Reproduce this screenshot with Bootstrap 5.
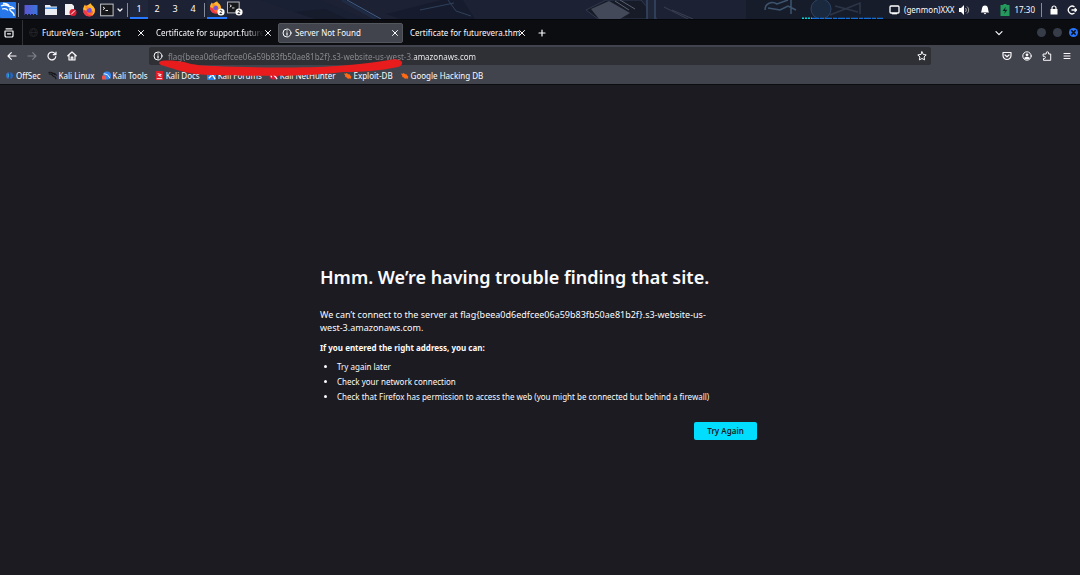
<!DOCTYPE html>
<html lang="en">
<head>
<meta charset="utf-8">
<meta name="viewport" content="width=device-width, initial-scale=1">
<title>Server Not Found</title>
<link href="https://cdn.jsdelivr.net/npm/bootstrap@5.3.0/dist/css/bootstrap.min.css" rel="stylesheet">
<style>
  body { background: #1c1b22; color: #fbfbfe; font-family: "Noto Sans", sans-serif; font-size: 8px; line-height: 12px; }
  button { background: none; border: 0; padding: 0; color: inherit; }
  svg { display: block; flex: none; }
  .ln { fill: none; stroke: currentColor; stroke-width: 1.2; stroke-linecap: round; stroke-linejoin: round; }
  .cell { display: flex; align-items: center; justify-content: center; flex: none; }
  .w-10p { width: 10px; } .w-16p { width: 16px; } .w-18p { width: 18px; } .w-20p { width: 20px; }

  .panel { height: 19px; background: #1c2133; overflow: hidden; }
  .wallpaper { position: absolute; top: 0; left: 260px; opacity: .8; }
  .rule { width: 1px; height: 14px; background: #858b99; flex: none; margin: 0 2px; }
  .under { height: 19px; border-bottom: 2px solid transparent; font-size: 9px; }
  .under.on { border-color: #2777ff; background: #20273b; }
  .clock { margin-right: 4px; }

  .tabstrip { height: 26px; background: #0c0d11; border-top: 1px solid #050609; }
  .pinned { width: 23px; height: 25px; border-right: 1px solid #303238; padding-right: 4px; }
  .tabs { gap: 2px; padding: 0 2px 0 1px; }
  .tab { width: 125px; height: 20px; border-radius: 2px; padding: 0 4px 0 5px; }
  .tab.on { background: #42444d; border: 1px solid #54565e; padding: 0 3px; gap: 3px; }
  .tab .title { flex: 1 1 0; min-width: 0; white-space: nowrap; }
  .fade-out { -webkit-mask-image: linear-gradient(90deg, #000 82%, transparent); mask-image: linear-gradient(90deg, #000 82%, transparent); }
  .dot { width: 9px; height: 9px; border-radius: 50%; background: #373c49; }
  .dot.close-win { background: #2777ff; color: #0c0d11; }
  .window-buttons { gap: 7px; padding-right: 2px; }

  .toolbar { height: 22px; background: #42444d; }
  .side { width: 149px; padding: 0 3px 0 2px; }
  .urlbar { height: 18px; background: #2f3035; border-radius: 2px; }
  .urlbar input { border: 0; outline: 0; padding: 0 0 0 1px; min-width: 0; height: 16px; font-size: 8px; color: #fbfbfe;
    background: linear-gradient(90deg, #8d8e92 247px, #fbfbfe 247px); -webkit-background-clip: text; background-clip: text; -webkit-text-fill-color: transparent; }
  .bookmarks { height: 18px; background: #42444d; border-bottom: 1px solid #0c0d11; gap: 7px; padding: 0 5px; }
  .bookmarks a { color: #fbfbfe; text-decoration: none; white-space: nowrap; gap: 2px; }
  .scribble { position: absolute; left: 157px; top: 58px; pointer-events: none; }

  .message { max-width: 440px; padding-top: 179px; }
  .message h1 { font-size: 18px; line-height: 26px; font-weight: 600; margin-bottom: 18px; white-space: nowrap; }
  .message .cause { font-size: 9px; line-height: 13px; max-width: 400px; margin-bottom: 8px; }
  .message .hint { margin-bottom: 5px; }
  .message ul { padding-left: 17px; margin-bottom: 18px; }
  .message li { line-height: 15px; }
  .retry { width: 63px; height: 18px; border-radius: 2px; background: #00ddff; color: #1c1b22; font-weight: 600; margin-right: 3px; }
</style>
</head>
<body>
<svg width="0" height="0" class="position-absolute" aria-hidden="true">
  <symbol id="x" viewBox="0 0 8 8"><path class="ln" style="stroke-width:1" d="M1.5 1.5l5 5M6.5 1.5l-5 5"/></symbol>
  <symbol id="info" viewBox="0 0 10 10"><circle class="ln" cx="5" cy="5" r="4" style="stroke-width:1"/><path class="ln" d="M5 4.8v2.3M5 2.9v.1"/></symbol>
  <symbol id="fox" viewBox="0 0 14 14"><circle cx="7" cy="7.5" r="5.8" fill="#ff6a2b"/><path d="M1.2 7C1 4.500 2.300 3 3 1.600c.4 1 1 1.600 2 1.800C6 1.700 7.500 1 8.800.3c.2 2 4.600 3.200 4.100 8-.4 3-2.700 5-5.800 5 3-1 4.300-3 3.800-5.300z" fill="#ffb52e"/><path d="M1.200 6.500c-.3 4.200 2.400 7 6 7 2 0 3.500-.8 4.500-2-3 1.600-6.400.2-7-3z" fill="#f1394a"/><circle cx="7.200" cy="7.300" r="2.500" fill="#7550d8"/><path d="M3 4c2-1 3.600-.3 4.300 1.200-1.300.2-1.700.8-2.300 1.600z" fill="#ff8a2a"/></symbol>
  <symbol id="term" viewBox="0 0 14 14"><rect x=".6" y="1.100" width="12.500" height="11.700" fill="#16181c" stroke="#c4c6c9"/><path d="M3 4l1.800 1.300L3 6.600M5.500 7.500h2.500" stroke="#eee" fill="none"/></symbol>
  <symbol id="dragon" viewBox="0 0 10 10"><path d="M.5 1.800c2-.8 3.800-.4 5 .9 1.500-.4 2.600.2 3.400 1.500-1.200-.6-2-.4-2.600 0M1 3.400c2-.5 3.200.1 4 1.500.5 1 1.700 1 2.500 1.500.8.500 1.200 1.400 1.400 2.800M4.800 4.700C4 3.700 4.600 3 5.600 2.800" fill="none" stroke="currentColor" stroke-width="1.300"/></symbol>
  <symbol id="spark" viewBox="0 0 10 10"><path d="M1 2.800l1.800.3 1.400-.8 1.500 1.200 1.600.2 1 1.700 1.300 1.200-.8.700.3 1.200-2-.3-1.700.3-1.200-1.300-1.600-.5-.2-1.600z" fill="#ff6a13"/></symbol>
</svg>

<header class="position-relative">
  <div class="panel d-flex align-items-center position-relative">
    <svg class="wallpaper" width="640" height="19" viewBox="0 0 640 19" aria-hidden="true">
      <path d="M0 0h60l45 19H55z" fill="#192034"/>
      <path d="M35 12l30-3 22 10H55z" fill="#151b2a"/>
      <path d="M87 0l34 19" stroke="#4b6c9a" fill="none"/><path d="M82 0l34 19" stroke="#202d48" stroke-width="3"/>
      <path d="M126 14l55-14h22l12 19h-75z" fill="#151c2c"/><path d="M160 10l34-7M188 0l8 11 15 5" stroke="#334866" fill="none"/>
      <path d="M326 10l20-10h35l16 19h-59z" fill="#171a25" stroke="#354056"/><path d="M331 9l18-8 21 12-10 6h-21z" fill="#4d5463"/>
      <path d="M355 1l14 9M360 0l15 9" stroke="#687080"/>
      <path d="M385 0h11v19h-9z" fill="#20283a"/><path d="M387 0v19M395 0v19" stroke="#49678f"/>
      <path d="M404 7l24 12M412 10l21 9" stroke="#414858"/>
      <path d="M486 0h154v19H486z" fill="#171c29"/>
      <path d="M505 10c0-7 7-9 12-6l11-4M508 8l12 2 8-4 8 4M531 0v14" stroke="#46617e" fill="none" stroke-width="1.500"/>
      <circle cx="561" cy="9" r="10" fill="#1b2b41" stroke="#2f4c70"/><path d="M570 15l30-12v11M575 6l23 6" fill="none" stroke="#303c4e" stroke-width="1.500"/>
      <path d="M542 18.500h10" stroke="#00ffff" stroke-width="2" stroke-dasharray="2 1"/><path d="M552 18.500h71" stroke="#1683ff" stroke-dasharray="7 1 4 1" stroke-width="1.500"/>
    </svg>
    <button class="cell w-16p" aria-label="Applications"><svg width="16" height="16" viewBox="0 0 16 16"><rect width="16" height="16" rx="1" fill="#2777e8"/><path d="M1 4c3.500-1.700 6.500-1 8.500.8 2-.5 3.500.2 5 2.200-2-.9-3.500-.8-4.700-.1-1 2.500 3.800 1.700 4.500 7M2 7c3-1 5 0 6 1.500M3 1.500c3-.5 6 1 6.500 3.300" fill="none" stroke="#fff" stroke-width="1.300"/></svg></button>
    <span class="rule"></span>
    <button class="cell w-20p" aria-label="Show desktop"><svg width="14" height="12" viewBox="0 0 14 12"><defs><linearGradient id="g"><stop stop-color="#5c55d0"/><stop offset="1" stop-color="#3975dc"/></linearGradient></defs><rect x=".5" y="1" width="13" height="10" fill="url(#g)"/><path d="M1 10.500h12" stroke="#182038" stroke-dasharray="2 1"/></svg></button>
    <button class="cell w-20p" aria-label="Files"><svg width="14" height="12" viewBox="0 0 14 12"><path d="M1 1h5l1 1.500h6V11H1z" fill="#e9edf2"/><path d="M1 4.200h12" stroke="#3488e5" stroke-width="1.400"/></svg></button>
    <button class="cell w-18p" aria-label="Text editor"><svg width="13" height="14" viewBox="0 0 13 14"><path d="M1 1h7l2 2v9H1z" fill="#f1f1f1"/><circle cx="9" cy="9.500" r="3.500" fill="#da1f34"/><path d="M7 11.500l4-4" stroke="#fff"/></svg></button>
    <button class="cell w-20p" aria-label="Web browser"><svg width="14" height="14"><use href="#fox"/></svg></button>
    <button class="cell w-16p" aria-label="Terminal"><svg width="14" height="14"><use href="#term"/></svg></button>
    <button class="cell w-10p" aria-label="More terminals"><svg width="6" height="6" viewBox="0 0 6 6"><path class="ln" d="M1 2l2 2 2-2"/></svg></button>
    <span class="rule"></span>
    <button class="cell w-18p under on">1</button><button class="cell w-18p under">2</button><button class="cell w-18p under">3</button><button class="cell w-18p under">4</button>
    <span class="rule"></span>
    <button class="cell w-20p under on" aria-label="Browser windows"><svg width="16" height="15" viewBox="0 0 16 15"><use href="#fox" width="13" height="13"/><circle cx="12" cy="11" r="3.600" fill="#fff"/><path d="M10.800 10c.4-1.200 2.300-.8 2 .3-.1.700-1 1-1.900 2.300h2.200" fill="none" stroke="#222" stroke-width=".9"/></svg></button>
    <button class="cell w-16p under" aria-label="Terminal windows"><svg width="16" height="15" viewBox="0 0 16 15"><use href="#term" width="13" height="13"/><circle cx="12" cy="11" r="3.600" fill="#fff"/><path d="M10.800 10c.4-1.200 2.300-.8 2 .3-.1.700-1 1-1.900 2.300h2.200" fill="none" stroke="#222" stroke-width=".9"/></svg></button>

    <div class="d-flex align-items-center ms-auto position-relative">
      <span class="cell w-20p"><svg width="11" height="10" viewBox="0 0 11 10"><rect x="1" y="1" width="9" height="7" rx="1" fill="none" stroke="#fff" stroke-width="1.300"/><path d="M3 8.700h5" stroke="#fff" stroke-width="1.300"/></svg></span>
      <span>(genmon)XXX</span>
      <span class="cell w-20p"><svg width="11" height="10" viewBox="0 0 11 10"><path d="M0 3h2l3-3v10L2 7H0z" fill="#fff"/><path d="M6.500 3c1 1.200 1 2.800 0 4M8 1.500c2.200 2 2.200 5 0 7" fill="none" stroke="#aaa"/></svg></span>
      <span class="cell w-20p"><svg width="10" height="10" viewBox="0 0 10 10"><path d="M5 .5c4 0 2.500 5 4.200 7H.8C2.500 5.500 1 .5 5 .5z" fill="#fff"/><path d="M3.700 8h2.600L5 9.500z" fill="#fff"/></svg></span>
      <span class="cell w-20p"><svg width="10" height="12" viewBox="0 0 10 12"><path d="M3.500 0h3v1H9.500v11H.5V1h3z" fill="#25995c"/><path d="M5.800 2.800L2.500 7H5l-.8 3L7.500 5.800H5z" fill="#10202a"/></svg></span>
      <span class="clock">17:30</span>
      <span class="rule"></span>
      <span class="cell w-20p"><svg width="8" height="10" viewBox="0 0 8 10"><rect x=".5" y="4" width="7" height="5.500" fill="#fff"/><path d="M2 4.500V3a2 2 0 014 0v1.500" fill="none" stroke="#fff" stroke-width="1.200"/></svg></span>
      <button class="cell w-16p" aria-label="Log out"><svg width="10" height="10" viewBox="0 0 10 10"><path d="M7.500 2a3.800 3.800 0 100 6M4.500 5h5M7.700 3.200L9.500 5 7.700 6.800" fill="none" stroke="#fff" stroke-width="1.300"/></svg></button>
    </div>
  </div>

  <div class="tabstrip d-flex align-items-center">
    <button class="pinned cell" aria-label="Firefox View"><svg width="10" height="10" viewBox="0 0 10 10"><path class="ln" d="M2 .8h6M1 3h8v5.200l-.8.800H1.800L1 8.200zM3.500 5.800h3"/></svg></button>
    <div class="tabs d-flex">
      <div class="tab d-flex align-items-center"><svg class="me-1" width="9" height="9" viewBox="0 0 9 9"><path d="M4.500.5a4 4 0 100 8 4 4 0 000-8zM.5 4.500h8M4.500.5c-2.500 2-2.500 6 0 8M4.500.5c2.500 2 2.500 6 0 8" fill="none" stroke="#25272b" stroke-width=".8"/></svg><span class="title">FutureVera - Support</span><button aria-label="Close"><svg width="8" height="8"><use href="#x"/></svg></button></div>
      <div class="tab d-flex align-items-center"><span class="title fade-out">Certificate for support.future</span><button aria-label="Close"><svg width="8" height="8"><use href="#x"/></svg></button></div>
      <div class="tab on d-flex align-items-center"><svg width="10" height="10"><use href="#info"/></svg><span class="title">Server Not Found</span><button aria-label="Close"><svg width="8" height="8"><use href="#x"/></svg></button></div>
      <div class="tab d-flex align-items-center"><span class="title">Certificate for futurevera.thm</span><button aria-label="Close"><svg width="8" height="8"><use href="#x"/></svg></button></div>
    </div>
    <button class="cell w-20p" aria-label="New tab"><svg width="8" height="8" viewBox="0 0 8 8"><path class="ln" d="M4 1v6M1 4h6"/></svg></button>
    <button class="cell w-20p ms-auto" aria-label="List all tabs"><svg width="8" height="8" viewBox="0 0 8 8"><path class="ln" d="M1 2.700l3 3 3-3"/></svg></button>
    <div class="window-buttons d-flex ps-4 ms-1">
      <button class="dot" aria-label="Minimize"></button><button class="dot" aria-label="Maximize"></button><button class="dot close-win cell" aria-label="Close window"><svg width="7" height="7" viewBox="0 0 8 8"><path d="M1.500 1.500l5 5M6.500 1.500l-5 5" stroke="currentColor" stroke-width="1.700"/></svg></button>
    </div>
  </div>

  <div class="toolbar d-flex align-items-center">
    <div class="side d-flex">
      <button class="cell w-20p" aria-label="Back"><svg width="10" height="10" viewBox="0 0 10 10"><path class="ln" d="M9 5H1M4.300 1.700L1 5l3.300 3.300"/></svg></button>
      <button class="cell w-20p" aria-label="Forward" disabled><svg width="10" height="10" viewBox="0 0 10 10" style="color:#7c7e85"><path class="ln" d="M1 5h8M5.700 1.700L9 5 5.700 8.300"/></svg></button>
      <button class="cell w-20p" aria-label="Reload"><svg width="10" height="10" viewBox="0 0 10 10"><path class="ln" d="M8.800 5.500A3.900 3.900 0 118 2.600L9 3.500M9 1v2.700H6.300"/></svg></button>
      <button class="cell w-20p" aria-label="Home"><svg width="10" height="10" viewBox="0 0 10 10"><path class="ln" d="M.8 4.800L5 1l4.200 3.800M2 4.500V9h6V4.500M4.200 9V6.200h1.600V9"/></svg></button>
    </div>
    <div class="urlbar d-flex align-items-center flex-grow-1">
      <span class="cell w-18p"><svg width="10" height="10"><use href="#info"/></svg></span>
      <input class="flex-grow-1" type="text" aria-label="Address" value="flag{beea0d6edfcee06a59b83fb50ae81b2f}.s3-website-us-west-3.amazonaws.com">
      <button class="cell w-18p" aria-label="Bookmark this page"><svg width="10" height="10" viewBox="0 0 10 10"><path class="ln" style="stroke-width:1" d="M5 .8l1.300 2.700 2.900.4-2.100 2.100.5 2.900L5 7.500 2.400 8.900l.5-2.900L.8 3.900l2.900-.4z"/></svg></button>
    </div>
    <div class="side d-flex justify-content-end">
      <button class="cell w-20p" aria-label="Save to Pocket"><svg width="10" height="10" viewBox="0 0 10 10"><path class="ln" d="M1 1.500h8v3a4 4 0 01-8 0zM3 4l2 1.800L7 4"/></svg></button>
      <button class="cell w-20p" aria-label="Account"><svg width="10" height="10" viewBox="0 0 10 10"><circle class="ln" cx="5" cy="5" r="4.200" style="stroke-width:1"/><circle cx="5" cy="3.800" r="1.400" fill="currentColor"/><path d="M2.500 7.700V6.500q2.500-1.500 5 0v1.200q-2.500 1.300-5 0z" fill="currentColor"/></svg></button>
      <button class="cell w-20p" aria-label="Extensions"><svg width="10" height="10" viewBox="0 0 10 10"><path class="ln" style="stroke-width:1" d="M1.500 3h2.700V2a1.200 1.200 0 012.400 0v1H8.700v6.300H1.500V7.500h.8a1.100 1.100 0 000-2.200h-.8z"/></svg></button>
      <button class="cell w-20p" aria-label="Menu"><svg width="8" height="8" viewBox="0 0 8 8"><path class="ln" style="stroke-width:1" d="M1 1.500h6M1 4h6M1 6.500h6"/></svg></button>
    </div>
  </div>

  <nav class="bookmarks d-flex align-items-center" aria-label="Bookmarks">
    <a class="d-flex align-items-center" href="#"><svg width="9" height="9" viewBox="0 0 10 10"><path d="M4 1a4.200 4.200 0 000 8z" fill="#3d6fd8"/><path d="M6 1a4.200 4.200 0 010 8z" fill="#2166d0"/><path d="M3.800 3v4" stroke="#23b7ce"/></svg>OffSec</a>
    <a class="d-flex align-items-center" href="#"><svg width="9" height="9" style="color:#17181c"><use href="#dragon"/></svg>Kali Linux</a>
    <a class="d-flex align-items-center" href="#"><svg width="9" height="9" viewBox="0 0 10 10"><circle cx="5.500" cy="5" r="4.500" fill="#3187f2"/><path d="M2 3l4 1 3 4" stroke="#fff" fill="none"/><rect y="5" width="4.500" height="4.500" rx="1" fill="#ef5548"/></svg>Kali Tools</a>
    <a class="d-flex align-items-center" href="#"><svg width="9" height="9" viewBox="0 0 10 10"><rect x="1" width="8" height="10" fill="#e01c28"/><path d="M3 3l4 1-3 1 3 1M2 8.500h6" stroke="#fff" fill="none"/></svg>Kali Docs</a>
    <a class="d-flex align-items-center" href="#"><svg width="9" height="9" viewBox="0 0 10 10"><rect width="10" height="10" rx="1" fill="#2783e7"/><path d="M1 2l5 2 3 5M2 8l3-3" stroke="#fff" fill="none" stroke-width="1.500"/></svg>Kali Forums</a>
    <a class="d-flex align-items-center" href="#"><svg width="9" height="9" viewBox="0 0 10 10"><circle cx="5" cy="5" r="4.500" fill="#d91b35"/><path d="M1 3c4-1 5 2 8 6M3 7c-2-3 0-5 4-4" stroke="#fff" fill="none" stroke-width="1.400"/></svg>Kali NetHunter</a>
    <a class="d-flex align-items-center" href="#"><svg width="9" height="9"><use href="#spark"/></svg>Exploit-DB</a>
    <a class="d-flex align-items-center" href="#"><svg width="9" height="9"><use href="#spark"/></svg>Google Hacking DB</a>
  </nav>
  <svg class="scribble" width="246" height="19" viewBox="0 0 246 19" aria-hidden="true"><path d="M4 3C11 2 20 3 27 4C36 7 48 8 58 8C95 10 150 10 180 8C206 6 220 4 232 2Q242 0 245 4Q246 7 241 9C223 13 204 14 186 14C150 19 86 18 59 17C42 17 30 15 20 12C14 10 8 8 4 7Q0 5 4 3Z" fill="#e81c1c"/></svg>
</header>

<main class="message mx-auto">
  <h1>Hmm. We’re having trouble finding that site.</h1>
  <p class="cause">We can’t connect to the server at flag{beea0d6edfcee06a59b83fb50ae81b2f}.s3-website-us-west-3.amazonaws.com.</p>
  <p class="hint fw-bold">If you entered the right address, you can:</p>
  <ul>
    <li>Try again later</li>
    <li>Check your network connection</li>
    <li>Check that Firefox has permission to access the web (you might be connected but behind a firewall)</li>
  </ul>
  <div class="d-flex justify-content-end"><button class="retry">Try Again</button></div>
</main>
<script src="https://cdn.jsdelivr.net/npm/bootstrap@5.3.0/dist/js/bootstrap.bundle.min.js"></script>
</body>
</html>
